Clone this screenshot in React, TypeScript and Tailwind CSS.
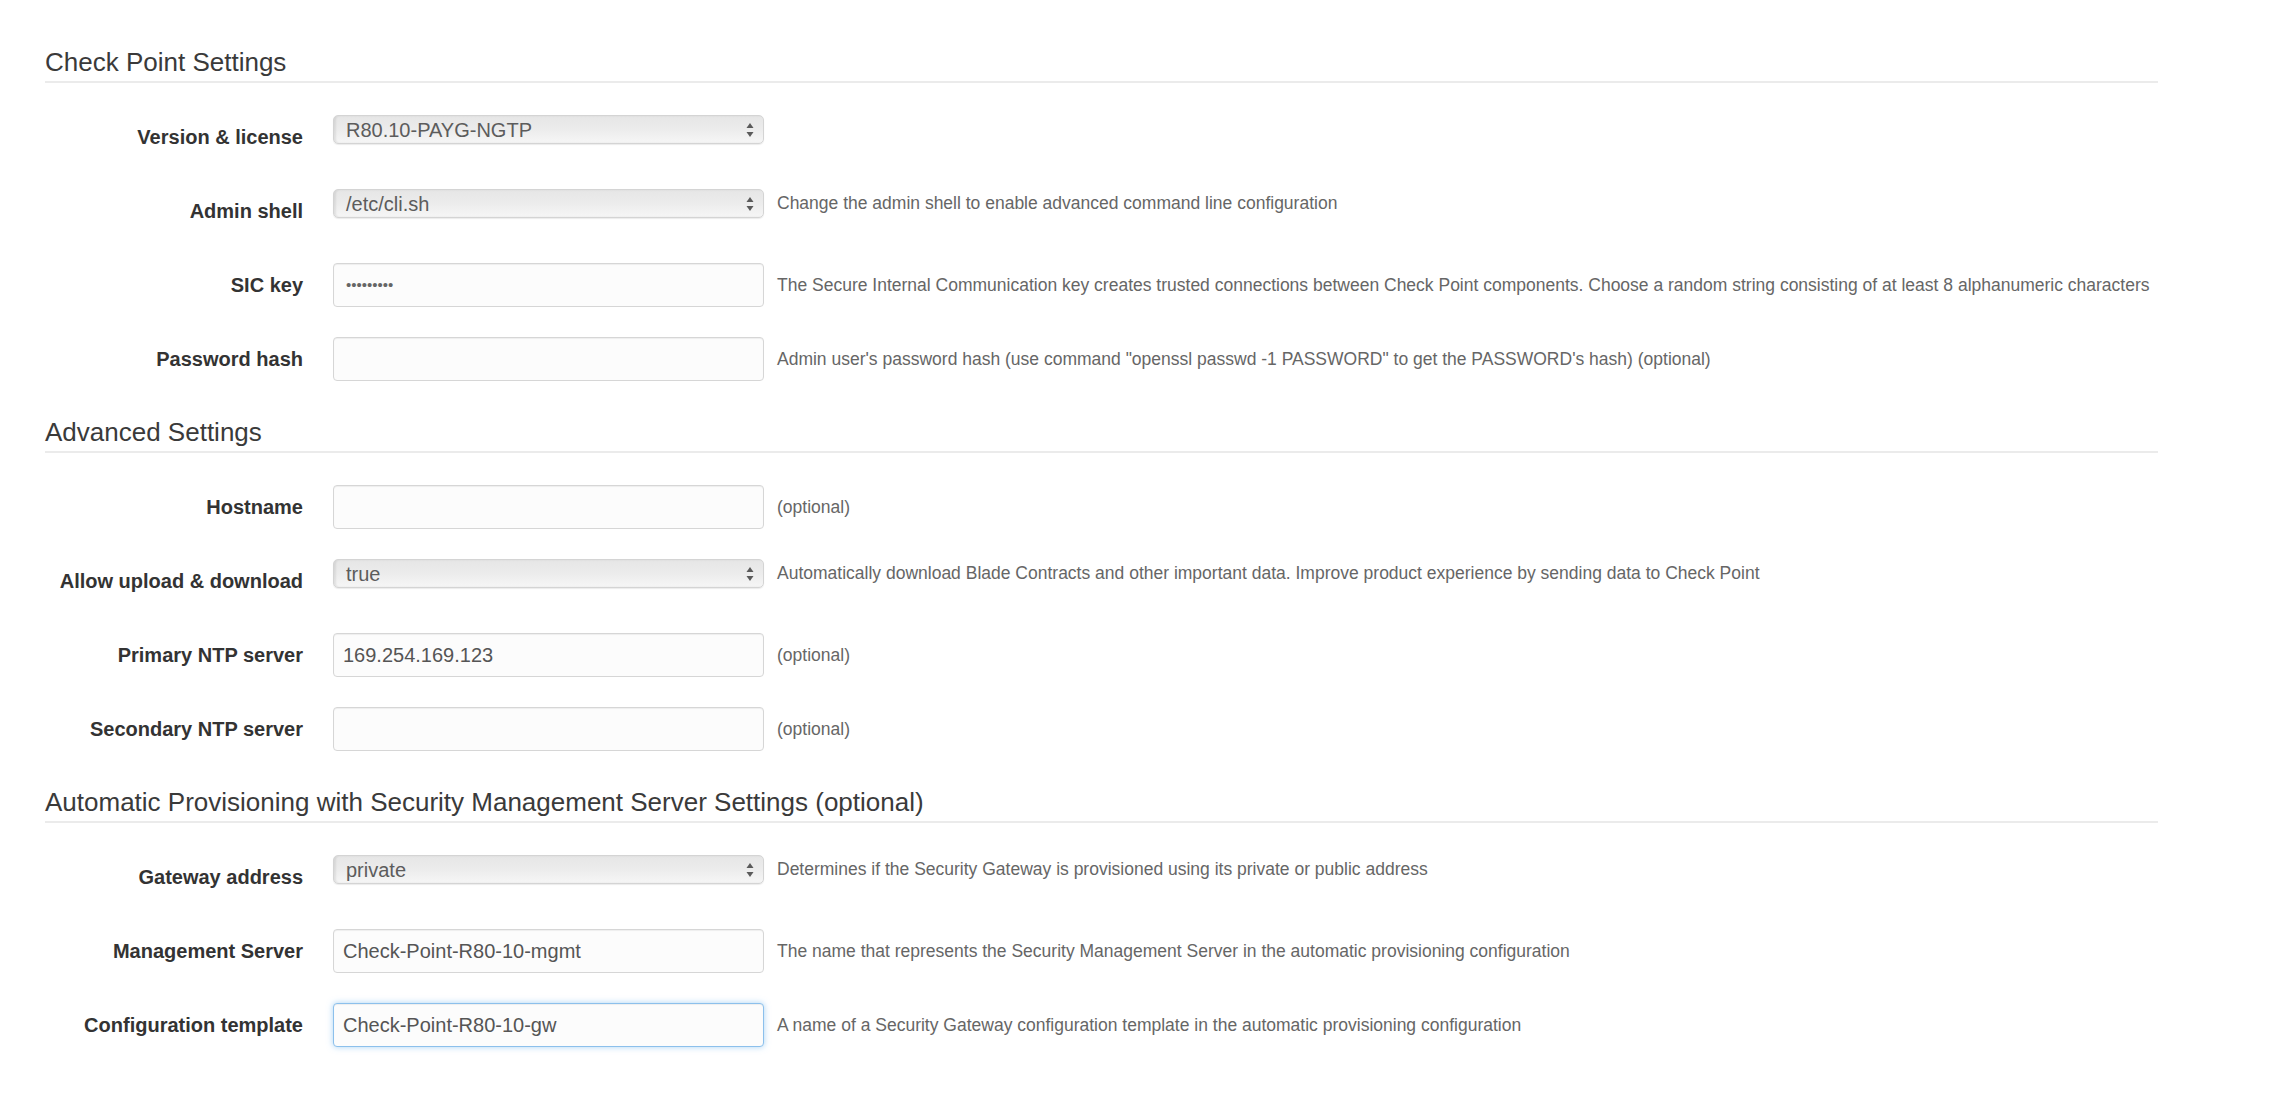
import type { ReactNode } from 'react';

type Field = {
  label: string;
  kind: 'select' | 'input';
  value?: string;
  focused?: boolean;
  masked?: boolean;
  help?: string;
};

type Section = {
  title: string;
  fields: Field[];
};

const SECTIONS: Section[] = [
  {
    title: 'Check Point Settings',
    fields: [
      { label: 'Version & license', kind: 'select', value: 'R80.10-PAYG-NGTP' },
      {
        label: 'Admin shell',
        kind: 'select',
        value: '/etc/cli.sh',
        help: 'Change the admin shell to enable advanced command line configuration',
      },
      {
        label: 'SIC key',
        kind: 'input',
        value: '•••••••••',
        masked: true,
        help: 'The Secure Internal Communication key creates trusted connections between Check Point components. Choose a random string consisting of at least 8 alphanumeric characters',
      },
      {
        label: 'Password hash',
        kind: 'input',
        help: 'Admin user\'s password hash (use command "openssl passwd -1 PASSWORD" to get the PASSWORD\'s hash) (optional)',
      },
    ],
  },
  {
    title: 'Advanced Settings',
    fields: [
      { label: 'Hostname', kind: 'input', help: '(optional)' },
      {
        label: 'Allow upload & download',
        kind: 'select',
        value: 'true',
        help: 'Automatically download Blade Contracts and other important data. Improve product experience by sending data to Check Point',
      },
      { label: 'Primary NTP server', kind: 'input', value: '169.254.169.123', help: '(optional)' },
      { label: 'Secondary NTP server', kind: 'input', help: '(optional)' },
    ],
  },
  {
    title: 'Automatic Provisioning with Security Management Server Settings (optional)',
    fields: [
      {
        label: 'Gateway address',
        kind: 'select',
        value: 'private',
        help: 'Determines if the Security Gateway is provisioned using its private or public address',
      },
      {
        label: 'Management Server',
        kind: 'input',
        value: 'Check-Point-R80-10-mgmt',
        help: 'The name that represents the Security Management Server in the automatic provisioning configuration',
      },
      {
        label: 'Configuration template',
        kind: 'input',
        value: 'Check-Point-R80-10-gw',
        focused: true,
        help: 'A name of a Security Gateway configuration template in the automatic provisioning configuration',
      },
    ],
  },
];

function SelectArrows() {
  return (
    <svg width="8" height="16" viewBox="0 0 8 16" className="flex-shrink-0">
      <polygon points="0.5,6 4,1 7.5,6" fill="#5a5a5a" />
      <polygon points="0.5,10 4,15 7.5,10" fill="#5a5a5a" />
    </svg>
  );
}

function FakeSelect({ value }: { value?: string }) {
  return (
    <div className="flex h-[29px] w-[431px] items-center justify-between rounded-[5px] border border-[#d4d4d4] bg-gradient-to-b from-[#e6e6e6] via-[#ececec] to-[#f6f6f6] pl-[12px] pr-[9px] text-[20px] leading-none text-[#5c5c5c] shadow-[inset_2px_0_2px_rgba(0,0,0,0.08),0_1px_1px_rgba(0,0,0,0.08)]">
      <span>{value}</span>
      <SelectArrows />
    </div>
  );
}

function FakeInput({ value, focused, masked }: { value?: string; focused?: boolean; masked?: boolean }) {
  const ring = focused
    ? 'border-[#8cc0ec] shadow-[0_0_6px_rgba(102,175,233,0.55),inset_0_1px_1px_rgba(0,0,0,0.06)]'
    : 'border-[#d6d6d6] shadow-[inset_0_1px_1px_rgba(0,0,0,0.06)]';
  return (
    <div
      className={`flex h-[44px] w-[431px] items-center rounded-[4px] border bg-[#fcfcfc] pl-[9px] text-[#555] ${ring} ${
        masked ? 'pl-[12px] text-[15px] text-[#666]' : 'text-[20px]'
      }`}
    >
      {value}
    </div>
  );
}

function Row({ field }: { field: Field }) {
  let control: ReactNode;
  if (field.kind === 'select') control = <FakeSelect value={field.value} />;
  else control = <FakeInput value={field.value} focused={field.focused} masked={field.masked} />;

  return (
    <div className="flex items-start">
      <label className="flex h-[44px] w-[258px] flex-shrink-0 items-center justify-end text-[20px] font-bold text-[#333]">
        {field.label}
      </label>
      <div className="ml-[30px] flex items-center">
        {control}
        {field.help && (
          <span className="ml-[13px] whitespace-nowrap text-[17.5px] text-[#666]">{field.help}</span>
        )}
      </div>
    </div>
  );
}

export default function App() {
  return (
    <div className="min-h-[1094px] bg-white pl-[45px] pr-[128px] pt-[47px] font-['Liberation_Sans',Arial,sans-serif]">
      {SECTIONS.map((section, i) => (
        <section key={section.title} className={i > 0 ? 'mt-[36px]' : ''}>
          <h3 className="border-b-2 border-[#ebebeb] pb-1 text-[26px] leading-[30px] font-normal text-[#3a3a3a]">
            {section.title}
          </h3>
          <div className="mt-8 flex flex-col gap-[30px]">
            {section.fields.map((field) => (
              <Row key={field.label} field={field} />
            ))}
          </div>
        </section>
      ))}
    </div>
  );
}
